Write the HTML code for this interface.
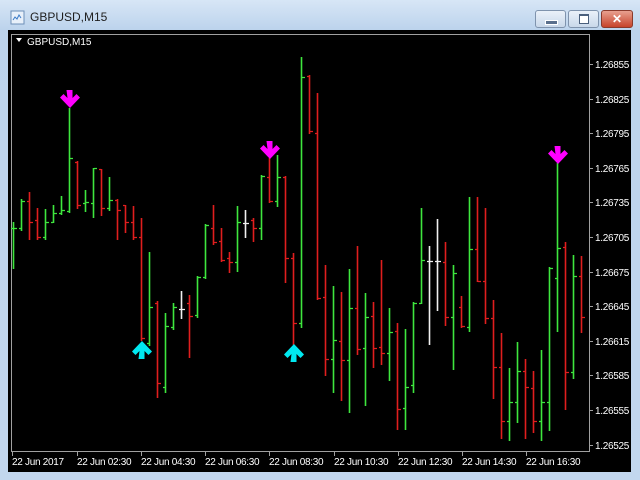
<!DOCTYPE html>
<html><head><meta charset="utf-8"><style>
html,body{margin:0;padding:0;width:640px;height:480px;overflow:hidden;background:#c5d9ee;font-family:"Liberation Sans",sans-serif}
#win{position:absolute;left:0;top:0;width:640px;height:480px;background:linear-gradient(#d7e6f6,#bcd3ec 30px,#c2d7ee);}
#title{position:absolute;left:30px;top:10px;font-size:12px;color:#1e1e1e}
.btn{position:absolute;top:10px;height:16px;border:1px solid #7f93ad;border-radius:3px;background:linear-gradient(#eaf1f9,#c9d8ea)}
#blk{position:absolute;left:8px;top:30px;width:623px;height:442px;background:#000}
svg{position:absolute;left:0;top:0}
</style></head><body>
<div id="win"></div>
<svg width="22" height="22" style="left:8px;top:8px"><rect x="3" y="3" width="13" height="13" fill="#e8f0fa" stroke="#6d8fb8"/><path d="M5 12 l2-3 2 2 2-4 2 3" stroke="#3a7bc8" fill="none"/></svg>
<div id="title">GBPUSD,M15</div>
<div class="btn" style="left:535px;width:29px"><div style="position:absolute;left:9px;top:9px;width:11px;height:3px;background:#5a6f8c;border:1px solid #fff"></div></div>
<div class="btn" style="left:568px;width:29px"><div style="position:absolute;left:10px;top:3px;width:8px;height:7px;border:1px solid #4a5f7c;border-top-width:2px;background:#fff"></div></div>
<div class="btn" style="left:601px;width:30px;background:linear-gradient(#e8a08f,#c7432b);border-color:#8a3a2c;color:#fff;font-weight:bold;font-size:12px;text-align:center;line-height:16px">✕</div>
<div id="blk"></div>
<svg id="ch" width="640" height="480">
<rect x="11.5" y="34.5" width="578" height="417" fill="none" stroke="#a0a0a0"/>
<path d="M16 38 l6 0 -3 4z" fill="#fff"/>
<text x="27" y="45" font-size="10" fill="#fff" font-family="Liberation Sans, sans-serif">GBPUSD,M15</text>
<g id="bars"></g>
<g font-size="10" fill="#fff" font-family="Liberation Sans, sans-serif" letter-spacing="-0.3">
<text x="595" y="68">1.26855</text><text x="595" y="103">1.26825</text><text x="595" y="137">1.26795</text><text x="595" y="172">1.26765</text><text x="595" y="206">1.26735</text><text x="595" y="241">1.26705</text><text x="595" y="276">1.26675</text><text x="595" y="310">1.26645</text><text x="595" y="345">1.26615</text><text x="595" y="379">1.26585</text><text x="595" y="414">1.26555</text><text x="595" y="449">1.26525</text>
<text x="12" y="465">22 Jun 2017</text><text x="77" y="465">22 Jun 02:30</text><text x="141" y="465">22 Jun 04:30</text><text x="205" y="465">22 Jun 06:30</text><text x="269" y="465">22 Jun 08:30</text><text x="334" y="465">22 Jun 10:30</text><text x="398" y="465">22 Jun 12:30</text><text x="462" y="465">22 Jun 14:30</text><text x="526" y="465">22 Jun 16:30</text>
</g>
<path stroke="#a0a0a0" shape-rendering="crispEdges" d="M590 64.5h3M590 99.5h3M590 133.5h3M590 168.5h3M590 202.5h3M590 237.5h3M590 272.5h3M590 306.5h3M590 341.5h3M590 375.5h3M590 410.5h3M590 445.5h3M12.5 452v4M77.5 452v4M141.5 452v4M205.5 452v4M269.5 452v4M334.5 452v4M398.5 452v4M462.5 452v4M526.5 452v4"/>
<g id="arr"></g>
</svg>
<script>
var d=[
['g',222,268,228,228],['g',199,230,228,201],['r',192,239,201,222],['r',208,239,220,237],['g',209,239,237,222],['g',205,222,222,213],['g',196,214,213,210],['g',108,212,211,158],['r',161,208,162,205],['g',190,211,203,202],['g',168,217,203,168],['r',169,215,169,208],['g',177,210,208,200],['r',199,239,200,210],['r',205,232,205,222],['r',206,239,222,237],['r',218,340,237,338],['g',252,345,343,307],
['r',301,397,303,383],['g',313,392,387,326],['g',303,329,327,307],['w',291,318,309,309],['r',295,357,303,316],['g',276,317,315,277],['g',224,278,277,225],['r',205,244,228,242],['r',228,261,241,260],['r',252,272,258,262],['g',206,271,262,222],['w',210,237,223,223],['r',218,241,220,228],['g',175,239,228,176],['r',158,202,177,201],['g',155,206,201,177],['r',176,282,177,258],['r',253,344,258,323],['g',57,327,323,77],
['r',75,133,76,131],['r',93,299,133,298],['r',265,375,297,359],['g',286,392,359,340],['r',292,400,341,360],['g',269,412,360,308],['r',246,354,308,349],['g',293,405,348,317],['r',302,367,316,348],['r',260,364,347,353],['g',308,380,353,332],['r',323,429,331,409],['g',329,429,408,387],['g',302,392,385,303],['g',208,303,303,260],['w',246,344,261,261],['w',219,310,261,261],['r',242,325,262,317],
['g',265,369,317,273],['r',296,327,307,326],['g',197,331,327,249],['r',197,281,249,281],['r',208,323,281,318],['r',300,398,318,367],['r',333,438,367,421],['g',368,440,421,402],['g',342,422,402,371],['r',359,438,371,387],['r',371,432,388,421],['g',350,440,421,402],['g',267,430,402,268],['g',163,331,278,248],['r',242,409,247,372],['g',255,378,372,276],['r',256,332,276,317]];
var col={g:'#3ee63e',r:'#e01e1e',w:'#f0f0f0'},pv={g:'',r:'',w:''},ph={g:'',r:'',w:''};
d.forEach(function(b,i){var x=13+8*i;pv[b[0]]+='M'+(x+.5)+' '+b[1]+'V'+(b[2]+1);ph[b[0]]+='M'+(x-2)+' '+(b[3]+.5)+'h2M'+(x+1)+' '+(b[4]+.5)+'h3';});
var s='';for(var k in pv){s+='<path fill="none" stroke="'+col[k]+'" stroke-width="1.6" d="'+pv[k]+'"/>';s+='<path fill="none" stroke="'+col[k]+'" stroke-width="1.3" d="'+ph[k]+'"/>';}
document.getElementById('bars').innerHTML=s;
function dn(x,t){return '<path fill="#ff00ff" d="M'+(x-2.5)+' '+(t-18)+'h6v8l4-4 3.5 3.5-10 10.5-10-10.5 3.5-3.5 4 4z"/>';}
function up(x,t){return '<path fill="#00e8f0" d="M'+(x-2.5)+' '+(t+18)+'h6v-8l4 4 3.5-3.5-10-10.5-10 10.5 3.5 3.5 4-4z"/>';}
document.getElementById('arr').innerHTML=dn(69,108)+dn(269,159)+dn(557,164)+up(141,341)+up(293,344);
</script>
</body></html>
